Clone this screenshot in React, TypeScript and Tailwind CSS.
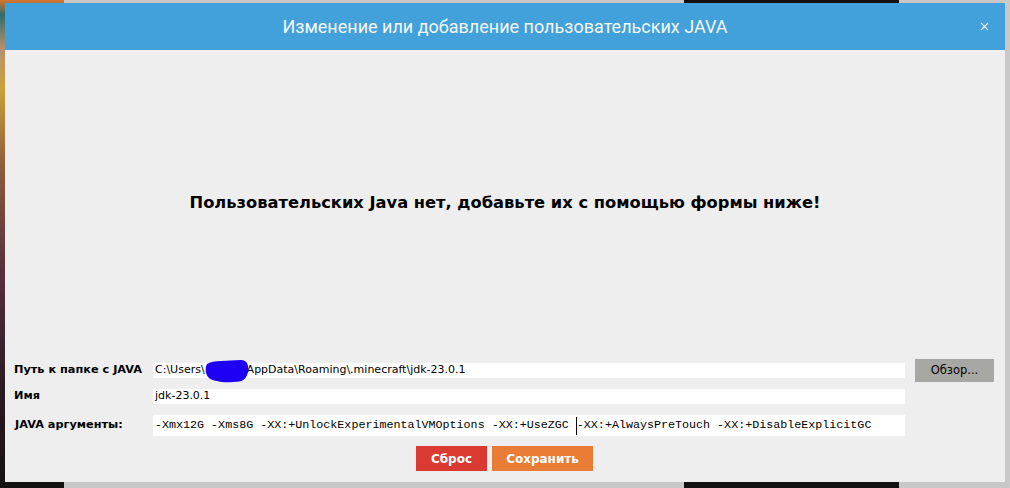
import { X } from "lucide-react";

function Blob() {
  return (
    <span className="relative inline-block h-[12px] w-[42px] align-middle">
      <svg
        viewBox="0 0 44 24"
        className="absolute left-0 top-[-6px] h-[24px] w-[44px]"
        aria-hidden
      >
        <path
          d="M2 5 C8 1 22 2 36 1 C42 1 44 6 43 12 C42 20 38 23 28 23 C18 24 8 22 4 19 C0 15 0 9 2 5 Z"
          fill="#1e00f5"
        />
      </svg>
    </span>
  );
}

const label = "font-['DejaVu_Sans',sans-serif] text-[11.3px] font-bold text-black";
const field = "flex items-center bg-white px-[2px] text-black";

export default function App() {
  return (
    <div className="relative h-[488px] w-[1010px] overflow-hidden">
      {/* launcher behind the dialog */}
      <div className="flex h-full w-full">
        <div className="w-[64px] bg-[linear-gradient(180deg,#d9752a_0%,#2e6c6a_3%,#b89070_10%,#c9a23a_18%,#8a5a3a_35%,#5a3040_55%,#2a1a22_80%,#151212_100%)]" />
        <div className="flex-1 bg-[#c8c8c8]" />
        <div className="w-[215px] bg-[#111111]" />
        <div className="w-[111px] bg-[#c8c8c8]" />
      </div>

      <div className="absolute left-[5px] top-[3px] flex h-[479px] w-[1000px] flex-col bg-[#eeeeee]">
        <div className="relative flex h-[47px] shrink-0 items-center justify-center bg-[#42a0da]">
          <span className="font-['Roboto',sans-serif] text-[18px] text-[#f4f8fb]">
            Изменение или добавление пользовательских JAVA
          </span>
          <button className="absolute right-[14px] top-[17px] text-white">
            <X size={13} strokeWidth={2} />
          </button>
        </div>

        <div className="flex flex-1 items-center justify-center pb-[2px]">
          <p className="font-['DejaVu_Sans',sans-serif] text-[16.3px] font-bold text-black">
            Пользовательских Java нет, добавьте их с помощью формы ниже!
          </p>
        </div>

        <div className="grid grid-cols-[129px_752px_79px] items-center gap-x-[10px] pl-[9px] pr-[11px]">
          <span className={label}>Путь к папке с JAVA</span>
          <div className={`${field} h-[15px] font-['DejaVu_Sans',sans-serif] text-[11px]`}>
            C:\Users\
            <Blob />
            AppData\Roaming\.minecraft\jdk-23.0.1
          </div>
          <button className="h-[23px] bg-[#a7a8a3] font-['DejaVu_Sans',sans-serif] text-[11.5px] text-black">
            Обзор...
          </button>

          <span className={`${label} mt-[6px]`}>Имя</span>
          <div className={`${field} mt-[6px] h-[15px] font-['DejaVu_Sans',sans-serif] text-[11px]`}>
            jdk-23.0.1
          </div>
          <div />

          <span className={`${label} mt-[10px] pl-[1px]`}>JAVA аргументы:</span>
          <div className={`${field} mt-[10px] h-[21px] whitespace-pre font-['Liberation_Mono',monospace] text-[11.7px]`}>
            -Xmx12G -Xms8G -XX:+UnlockExperimentalVMOptions -XX:+UseZGC{" "}
            <span className="inline-block h-[18px] w-0 border-l border-black" />
            -XX:+AlwaysPreTouch -XX:+DisableExplicitGC
          </div>
          <div />
        </div>

        <div className="flex justify-center gap-[5px] pb-[11px] pt-[10px] pr-[1px]">
          <button className="h-[25px] w-[71px] bg-[#da3a31] font-['DejaVu_Sans',sans-serif] text-[12px] font-bold text-white">
            Сброс
          </button>
          <button className="h-[25px] w-[101px] bg-[#e97d35] font-['DejaVu_Sans',sans-serif] text-[12px] font-bold text-white">
            Сохранить
          </button>
        </div>
      </div>
    </div>
  );
}
